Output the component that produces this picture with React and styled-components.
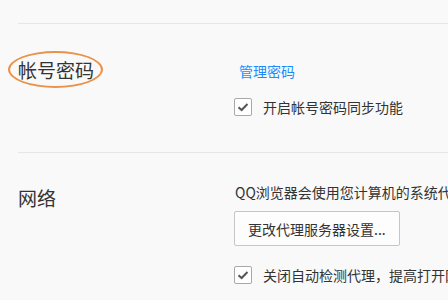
import React from 'react'
import styled, { createGlobalStyle } from 'styled-components'

const GlobalStyle = createGlobalStyle`
  html, body {
    margin: 0;
    padding: 0;
    background: #f9f9f9;
    overflow: hidden;
  }
  body {
    font-family: "Noto Sans CJK SC", "Microsoft YaHei", sans-serif;
    color: #333;
  }
`

const Page = styled.div`
  width: 448px;
  height: 300px;
  padding: 23px 0 0 18px;
  box-sizing: border-box;
  overflow: hidden;
`

const Section = styled.div`
  display: flex;
  align-items: flex-start;
  border-top: 1px solid #e6e6e6;
  padding-top: ${props => props.$top}px;
  padding-bottom: ${props => props.$bottom}px;
  width: 600px;
`

const Label = styled.div`
  position: relative;
  width: 216px;
  flex-shrink: 0;
  font-size: 19px;
  line-height: 20px;
  color: #333;
  margin-top: ${props => props.$offset}px;
`

const Circle = styled.span`
  position: absolute;
  left: -10px;
  top: -9px;
  width: 95px;
  height: 37px;
  border: 2px solid #e8924a;
  border-radius: 50%;
  box-sizing: border-box;
`

const Body = styled.div`
  display: flex;
  flex-direction: column;
  align-items: flex-start;
  white-space: nowrap;
`

const Link = styled.a`
  font-size: 14px;
  line-height: 20px;
  color: #1a8cff;
  text-decoration: none;
  margin-left: 5px;
`

const Text = styled.div`
  font-size: 14px;
  line-height: 20px;
  color: #333;
  margin-left: 1px;
`

const Button = styled.button`
  margin-top: 9px;
  height: 35px;
  width: 166px;
  padding: 0 0 0 13px;
  text-align: left;
  font-family: inherit;
  font-size: 14px;
  color: #333;
  background: #fdfdfd;
  border: 1px solid #c6c6c6;
  border-radius: 2px;
`

const CheckRow = styled.label`
  display: flex;
  align-items: center;
  gap: 11px;
  margin-top: ${props => props.$gap}px;
  font-size: 14px;
  line-height: 18px;
  color: #333;
`

const Box = styled.span`
  width: 18px;
  height: 18px;
  box-sizing: border-box;
  border: 1px solid #a8a8a8;
  border-radius: 2px;
  background: #fff;
  display: flex;
  align-items: center;
  justify-content: center;
`

const Check = () => (
  <Box>
    <svg width="12" height="10" viewBox="0 0 12 10">
      <path d="M1.5 5.2 L4.6 8 L10.5 2" fill="none" stroke="#555" strokeWidth="2" />
    </svg>
  </Box>
)

export default function App() {
  return (
    <>
      <GlobalStyle />
      <Page>
        <Section $top={37} $bottom={36}>
          <Label $offset={-1}>
            <Circle />
            帐号密码
          </Label>
          <Body>
            <Link href="#">管理密码</Link>
            <CheckRow $gap={17}>
              <Check />
              开启帐号密码同步功能
            </CheckRow>
          </Body>
        </Section>
        <Section $top={29} $bottom={20}>
          <Label $offset={6}>网络</Label>
          <Body>
            <Text>QQ浏览器会使用您计算机的系统代理设置连接到网络。</Text>
            <Button>更改代理服务器设置...</Button>
            <CheckRow $gap={20}>
              <Check />
              关闭自动检测代理，提高打开网页速度
            </CheckRow>
          </Body>
        </Section>
      </Page>
    </>
  )
}
